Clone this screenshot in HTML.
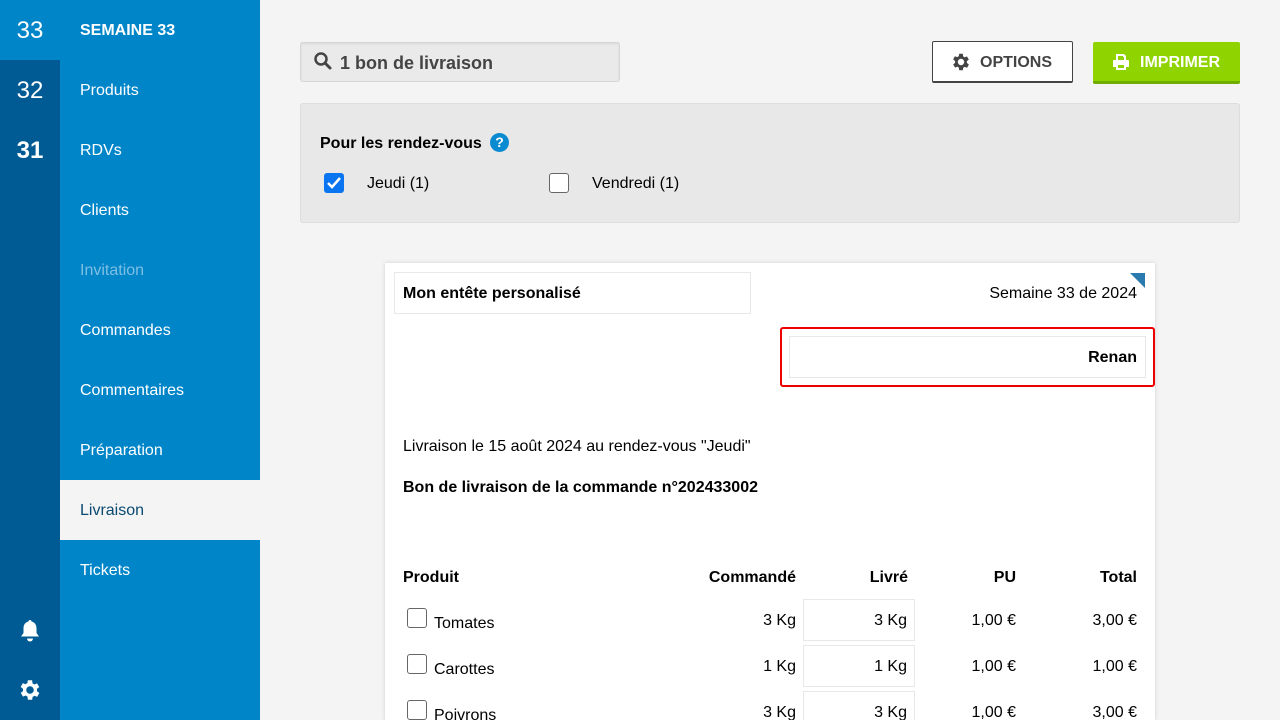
<!DOCTYPE html>
<html><head><meta charset="utf-8"><style>
*{margin:0;padding:0;box-sizing:border-box}
html{width:1280px;height:720px;overflow:hidden}
body{width:1280px;height:720px;overflow:hidden;background:#f4f4f4;font-family:"Liberation Sans",sans-serif;position:relative;color:#000}
.a{position:absolute}
.wk{left:0;width:60px;height:60px;color:#fff;font-size:24px;text-align:center;line-height:62px}
.nav{left:60px;width:200px;height:60px;line-height:62px;padding-left:20px;color:#fff;font-size:16px}
.t{font-size:16px;white-space:nowrap;margin-top:1px}
.r{text-align:right}
.cb{width:20px;height:20px;border:1px solid #666;border-radius:3px;background:#fff}
.box{border:1px solid #e8e8e8}
</style></head><body>
<div class="a" style="left:0;top:0;width:60px;height:720px;background:#005b94"></div>
<div class="a" style="left:60px;top:0;width:200px;height:720px;background:#0085c8"></div>
<div class="a wk" style="top:0;background:#0085c8">33</div>
<div class="a wk" style="top:60px">32</div>
<div class="a wk" style="top:120px;font-weight:bold">31</div>
<div class="a nav" style="top:0;font-weight:bold">SEMAINE 33</div>
<div class="a nav" style="top:60px">Produits</div>
<div class="a nav" style="top:120px">RDVs</div>
<div class="a nav" style="top:180px">Clients</div>
<div class="a nav" style="top:240px;color:#7fbfe3">Invitation</div>
<div class="a nav" style="top:300px">Commandes</div>
<div class="a nav" style="top:360px">Commentaires</div>
<div class="a nav" style="top:420px">Préparation</div>
<div class="a nav" style="top:480px;background:#f4f4f4;color:#0a4a70">Livraison</div>
<div class="a nav" style="top:540px">Tickets</div>
<svg class="a" style="left:19px;top:619px" width="22" height="24" viewBox="0 0 22 24"><path d="M11 1c1 0 1.5.7 1.5 1.5C16 3.3 17.5 6 17.5 9.5v4.5l2.5 3.5H2l2.5-3.5V9.5C4.5 6 6 3.3 9.5 2.5 9.5 1.7 10 1 11 1z" fill="#fff"/><path d="M8 19.5h6a3 3 0 0 1-6 0z" fill="#fff"/></svg>
<svg class="a" style="left:17px;top:677px" width="26" height="26" viewBox="0 0 24 24"><path fill="#fff" d="M19.4 13a7.5 7.5 0 0 0 0-2l2.1-1.6-2-3.5-2.5 1a7.5 7.5 0 0 0-1.7-1L15 3h-4l-.4 2.7a7.5 7.5 0 0 0-1.7 1l-2.5-1-2 3.5L6.6 11a7.5 7.5 0 0 0 0 2l-2.1 1.6 2 3.5 2.5-1a7.5 7.5 0 0 0 1.7 1L11 21h4l.4-2.7a7.5 7.5 0 0 0 1.7-1l2.5 1 2-3.5zM13 15.5a3.5 3.5 0 1 1 0-7 3.5 3.5 0 0 1 0 7z" transform="translate(-1 0)"/></svg>

<div class="a" style="left:300px;top:42px;width:320px;height:40px;background:#eaeaea;border:1px solid #d6d6d6;border-radius:3px;box-shadow:inset 0 1px 2px rgba(0,0,0,.08)"></div>
<svg class="a" style="left:313px;top:51px" width="20" height="20" viewBox="0 0 20 20"><circle cx="8" cy="8" r="5.5" fill="none" stroke="#444" stroke-width="2.5"/><path d="M12 12l5 5" stroke="#444" stroke-width="3" stroke-linecap="round"/></svg>
<div class="a t" style="left:340px;top:52px;font-size:18px;font-weight:bold;color:#444">1 bon de livraison</div>

<div class="a" style="left:932px;top:41px;width:141px;height:42px;background:#fff;border:1px solid #444;border-bottom-width:2px;border-radius:2px"></div>
<svg class="a" style="left:950px;top:51px" width="22" height="22" viewBox="0 0 24 24"><path fill="#444" d="M19.4 13a7.5 7.5 0 0 0 0-2l2.1-1.6-2-3.5-2.5 1a7.5 7.5 0 0 0-1.7-1L15 3h-4l-.4 2.7a7.5 7.5 0 0 0-1.7 1l-2.5-1-2 3.5L6.6 11a7.5 7.5 0 0 0 0 2l-2.1 1.6 2 3.5 2.5-1a7.5 7.5 0 0 0 1.7 1L11 21h4l.4-2.7a7.5 7.5 0 0 0 1.7-1l2.5 1 2-3.5zM13 15.5a3.5 3.5 0 1 1 0-7 3.5 3.5 0 0 1 0 7z" transform="translate(-1 0)"/></svg>
<div class="a t" style="left:980px;top:53px;font-weight:bold;color:#444">OPTIONS</div>

<div class="a" style="left:1093px;top:42px;width:147px;height:42px;background:#8fd400;border-bottom:3px solid #6fae00;border-radius:2px"></div>
<svg class="a" style="left:1112px;top:53px" width="18" height="18" viewBox="0 0 18 18"><path fill="#fff" d="M4 1h8l2 2v4h2a1 1 0 0 1 1 1v6h-3v3H4v-3H1V8a1 1 0 0 1 1-1h2zM6 3v4h6V4h-1V3zM6 12v3h6v-3z"/></svg>
<div class="a t" style="left:1140px;top:53px;font-weight:bold;color:#fff">IMPRIMER</div>

<div class="a" style="left:300px;top:103px;width:940px;height:120px;background:#e8e8e8;border:1px solid #ddd;border-radius:3px"></div>
<div class="a t" style="left:320px;top:134px;font-weight:bold">Pour les rendez-vous</div>
<div class="a" style="left:490px;top:133px;width:19px;height:19px;border-radius:50%;background:#0a8ad0;color:#fff;font-weight:bold;font-size:14px;text-align:center;line-height:19px">?</div>
<div class="a" style="left:324px;top:173px;width:20px;height:20px;background:#0a75f0;border-radius:3px"></div>
<svg class="a" style="left:324px;top:173px" width="20" height="20"><path d="M4 10l4 4 8-9" stroke="#fff" stroke-width="2.5" fill="none"/></svg>
<div class="a t" style="left:367px;top:174px">Jeudi (1)</div>
<div class="a cb" style="left:549px;top:173px"></div>
<div class="a t" style="left:592px;top:174px">Vendredi (1)</div>

<div class="a" style="left:385px;top:263px;width:770px;height:457px;background:#fff;box-shadow:0 0 4px rgba(0,0,0,.15)"></div>
<svg class="a" style="left:1130px;top:273px" width="15" height="15"><path d="M0 0h15v15z" fill="#2a7ab0"/></svg>
<div class="a box" style="left:394px;top:272px;width:357px;height:42px"></div>
<div class="a t" style="left:403px;top:284px;font-weight:bold">Mon entête personalisé</div>
<div class="a t r" style="left:900px;width:237px;top:284px">Semaine 33 de 2024</div>
<div class="a" style="left:780px;top:327px;width:375px;height:60px;border:2px solid #e00;border-radius:3px"></div>
<div class="a box" style="left:789px;top:336px;width:357px;height:42px"></div>
<div class="a t r" style="left:900px;width:237px;top:348px;font-weight:bold">Renan</div>
<div class="a t" style="left:403px;top:437px">Livraison le 15 août 2024 au rendez-vous "Jeudi"</div>
<div class="a t" style="left:403px;top:478px;font-weight:bold">Bon de livraison de la commande n°202433002</div>

<div class="a t" style="left:403px;top:568px;font-weight:bold">Produit</div>
<div class="a t r" style="left:650px;width:146px;top:568px;font-weight:bold">Commandé</div>
<div class="a t r" style="left:810px;width:98px;top:568px;font-weight:bold">Livré</div>
<div class="a t r" style="left:920px;width:96px;top:568px;font-weight:bold">PU</div>
<div class="a t r" style="left:1030px;width:107px;top:568px;font-weight:bold">Total</div>

<div class="a cb" style="left:407px;top:608px"></div><div class="a t" style="left:434px;top:614px">Tomates</div>
<div class="a t r" style="left:700px;width:96px;top:611px">3 Kg</div>
<div class="a box" style="left:803px;top:599px;width:112px;height:42px"></div>
<div class="a t r" style="left:810px;width:97px;top:611px">3 Kg</div>
<div class="a t r" style="left:920px;width:96px;top:611px">1,00 €</div>
<div class="a t r" style="left:1030px;width:107px;top:611px">3,00 €</div>

<div class="a cb" style="left:407px;top:654px"></div><div class="a t" style="left:434px;top:660px">Carottes</div>
<div class="a t r" style="left:700px;width:96px;top:657px">1 Kg</div>
<div class="a box" style="left:803px;top:645px;width:112px;height:42px"></div>
<div class="a t r" style="left:810px;width:97px;top:657px">1 Kg</div>
<div class="a t r" style="left:920px;width:96px;top:657px">1,00 €</div>
<div class="a t r" style="left:1030px;width:107px;top:657px">1,00 €</div>

<div class="a cb" style="left:407px;top:700px"></div><div class="a t" style="left:434px;top:706px">Poivrons</div>
<div class="a t r" style="left:700px;width:96px;top:703px">3 Kg</div>
<div class="a box" style="left:803px;top:691px;width:112px;height:29px;border-bottom:none"></div>
<div class="a t r" style="left:810px;width:97px;top:703px">3 Kg</div>
<div class="a t r" style="left:920px;width:96px;top:703px">1,00 €</div>
<div class="a t r" style="left:1030px;width:107px;top:703px">3,00 €</div>
</body></html>
